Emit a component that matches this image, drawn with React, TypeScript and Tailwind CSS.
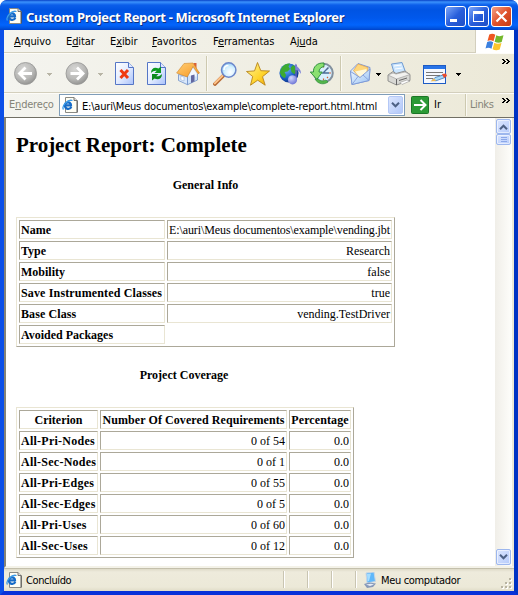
import React from "react";

const UI = "font-['DejaVu_Sans_Condensed','DejaVu_Sans',sans-serif] [font-stretch:condensed] text-[11px] leading-[14px] whitespace-nowrap";

function IePage({ className = "" }: { className?: string }) {
  return (
    <svg width="16" height="16" viewBox="0 0 16 16" className={"shrink-0 " + className}>
      <path d="M3.500.5h8.500l3 3v12H3.500z" fill="#fffef4" stroke="#8a8a84" />
      <path d="M15.300 3.500v12" stroke="#444" strokeWidth=".8" />
      <path d="M12 .5v3h3" fill="#ddd" stroke="#555" strokeWidth=".8" />
      <path d="M9.300 9.800C8 13 3 12.500 3 8.500S9 4.500 9 8.300H3.500" fill="none" stroke="#176bc7" strokeWidth="2.200" />
      <path d="M1.500 12.500C-.8 9.500 5.500 2 10.500 3.500" fill="none" stroke="#3c9be8" strokeWidth="1.300" />
    </svg>
  );
}

function Menu({ before = "", hot, after, w }: { before?: string; hot: string; after: string; w: string }) {
  return (
    <span className={w}>
      {before}
      <span className="underline underline-offset-1">{hot}</span>
      {after}
    </span>
  );
}

function Caret({ className, color }: { className: string; color: string }) {
  return (
    <svg width="5" height="3" viewBox="0 0 5 3" className={"shrink-0 " + className} shapeRendering="crispEdges">
      <path d="M0 0h5v1H4v1H3v1H2V2H1V1H0z" fill={color} />
    </svg>
  );
}

function More({ className }: { className: string }) {
  return (
    <svg width="8" height="5" viewBox="0 0 8 5" className={"shrink-0 " + className} shapeRendering="crispEdges">
      <path d="M0 0h2v1h1v1h1v1H3v1H2v1H0V4h1V3h1V2H1V1H0zM4 0h2v1h1v1h1v1H7v1H6v1H4V4h1V3h1V2H5V1H4z" fill="#000" />
    </svg>
  );
}

function Icon({ className, children }: { className: string; children: React.ReactNode }) {
  return (
    <svg width="24" height="24" viewBox="0 0 24 24" className={"shrink-0 " + className}>
      {children}
    </svg>
  );
}

function Separator({ className }: { className: string }) {
  return <div className={"h-[35px] w-[2px] shrink-0 border-l border-[#cdc9b0] bg-[#faf9f3] " + className} />;
}

function Defs() {
  return (
    <svg width="0" height="0" className="absolute">
      <defs>
        <radialGradient id="grey" cx=".4" cy=".3" r=".75">
          <stop stopColor="#d6d6d4" />
          <stop offset=".6" stopColor="#b9b9b7" />
          <stop offset="1" stopColor="#8f8f8d" />
        </radialGradient>
        <linearGradient id="page" x2="1" y2="1">
          <stop stopColor="#ffffff" />
          <stop offset=".5" stopColor="#e3ecff" />
          <stop offset="1" stopColor="#a9c1fa" />
        </linearGradient>
        <linearGradient id="gold" x2="1" y2="1">
          <stop stopColor="#fff59a" />
          <stop offset=".6" stopColor="#ffd42b" />
          <stop offset="1" stopColor="#eda10c" />
        </linearGradient>
        <linearGradient id="roof" x2="1" y2="1">
          <stop stopColor="#ffcf75" />
          <stop offset="1" stopColor="#f7951f" />
        </linearGradient>
        <radialGradient id="lens" cx=".6" cy=".65" r=".65">
          <stop stopColor="#ffffff" />
          <stop offset=".6" stopColor="#d1efff" />
          <stop offset="1" stopColor="#8ec9f4" />
        </radialGradient>
        <radialGradient id="globe" cx=".35" cy=".3" r=".75">
          <stop stopColor="#6fb5f7" />
          <stop offset=".6" stopColor="#1c63c8" />
          <stop offset="1" stopColor="#0c2c83" />
        </radialGradient>
        <radialGradient id="note" cx=".35" cy=".3" r=".75">
          <stop stopColor="#d4d8ff" />
          <stop offset="1" stopColor="#6a72d4" />
        </radialGradient>
        <linearGradient id="mail" x2="1" y2="1">
          <stop stopColor="#f0f8ff" />
          <stop offset="1" stopColor="#9cc4f4" />
        </linearGradient>
      </defs>
    </svg>
  );
}

function Toolbar() {
  return (
    <div className="flex h-[40px] shrink-0 items-start border-t border-[#fdfcf8] border-b border-b-[#d3cfbd] bg-linear-to-r from-[#f4f4ef] to-[#ece9d8]">
      <Icon className="ml-[10px] mt-[8px]">
        <circle cx="11.500" cy="11.500" r="11" fill="url(#grey)" stroke="#969694" strokeWidth=".8" />
        <path d="M18 11.500H6M11.500 5.500l-6 6 6 6" fill="none" stroke="#fff" strokeWidth="2.800" />
      </Icon>
      <Caret className="ml-[9px] mt-[19px]" color="#b8b5a6" />
      <Icon className="ml-[13px] mt-[8px]">
        <circle cx="12" cy="11.500" r="11" fill="url(#grey)" stroke="#969694" strokeWidth=".8" />
        <path d="M5.500 11.500h12M12 5.500l6 6-6 6" fill="none" stroke="#fff" strokeWidth="2.800" />
      </Icon>
      <Caret className="ml-[9px] mt-[19px]" color="#b8b5a6" />
      <Icon className="ml-[10px] mt-[8px]">
        <path d="M2.500.5h13l5 5v17h-18z" fill="url(#page)" stroke="#5576c6" />
        <path d="M15.500.5v5h5" fill="#dfe9ff" stroke="#5576c6" />
        <path d="M7.500 8l7.500 8M15 8l-7.500 8" stroke="#f03a12" strokeWidth="3" />
      </Icon>
      <Icon className="ml-[8px] mt-[8px]">
        <path d="M2.500.5h13l5 5v17h-18z" fill="url(#page)" stroke="#5576c6" />
        <path d="M15.500.5v5h5" fill="#dfe9ff" stroke="#5576c6" />
        <path d="M6 11C6 6.500 9.500 4.500 13.500 6.500L16 4.500V11H9.500L11.800 8.800C9.800 8.300 8 9 6 11z" fill="#0c9a20" />
        <path d="M17 12c0 4.500-3.500 6.500-7.500 4.500L7 18.500V12h6.500l-2.300 2.200c2 .5 3.800-.2 5.800-2.200z" fill="#0b8a1c" />
      </Icon>
      <Icon className="ml-[7px] mt-[8px]">
        <path d="M17.500 1h3v6h-3z" fill="#d86036" />
        <path d="M2.500 12.500l9 2v8.200l-9-4.200z" fill="#d9e8fb" stroke="#6f8fc6" strokeWidth=".8" />
        <path d="M11.500 13.500L17 4l6 7-1.500 1v6l-10 4.700z" fill="#cfe2fa" stroke="#6f8fc6" strokeWidth=".8" />
        <path d="M12.800 13.500L17 6l3.500 5.500v3z" fill="#f4f9ff" />
        <path d="M8 1.500L17 1l6.500 10-1.500.8-5-7.200L11.300 15 .6 11z" fill="url(#roof)" stroke="#d08a30" strokeWidth=".6" />
        <path d="M15 13.500l3.500-1v6.700L15 21z" fill="#63689f" />
        <path d="M4.800 14.200l3.200.8v4l-3.200-1.300z" fill="#fff" stroke="#8aa4cf" strokeWidth=".5" />
      </Icon>
      <Separator className="ml-[6px] mt-[2px]" />
      <Icon className="ml-[5px] mt-[8px]">
        <path d="M2 22l8-8" stroke="#b66a35" strokeWidth="3.800" strokeLinecap="round" />
        <path d="M1.800 21.400l7.700-7.700" stroke="#ffc58a" strokeWidth="2" strokeLinecap="round" />
        <circle cx="15.700" cy="8" r="7.200" fill="url(#lens)" stroke="#6c87cb" strokeWidth="1.500" />
        <path d="M11 8c0-3 2-4.500 4.500-4.500" fill="none" stroke="#fff" strokeWidth="1.500" />
      </Icon>
      <Icon className="ml-[9px] mt-[8px]">
        <path d="M11.500.5l3.300 8.200 8.700.3-7 5.700 2.700 8.500-7.500-5-7.200 5 2.200-8.700L.5 9.500l8-.6z" fill="url(#gold)" stroke="#b88418" strokeWidth=".9" />
      </Icon>
      <Icon className="ml-[9px] mt-[8px]">
        <circle cx="10" cy="11" r="9.600" fill="url(#globe)" />
        <path d="M2.500 6C4.500 2.500 8 1.300 11 1.500L9.500 4.500 11 7 8.500 9.500l-3 .5 1.500 3-1 3C3.500 15.500.8 12.500 1 9.500zM14 3l3.500 2.500.5 5-3 1.500-2.500-2-1-4z" fill="#3daa31" />
        <path d="M17 2.500v15" stroke="#5a60b8" strokeWidth="1.600" />
        <path d="M16.300 1c.5 4 6.200 5 5.700 11-1.500-3-3.200-4-5.700-4.300z" fill="#7e84d8" />
        <circle cx="13.500" cy="17.800" r="4.600" fill="url(#note)" />
      </Icon>
      <Icon className="ml-[7px] mt-[8px]">
        <circle cx="13.500" cy="11" r="9.300" fill="#d8efff" stroke="#83909e" strokeWidth="2" />
        <path d="M13.500 3.500v2M13.500 16.500v2M19 11h2M18 6l-1 1M18 16l-1-1" stroke="#d45f35" strokeWidth="1.200" />
        <path d="M18.500 5.500L13 11h6" fill="none" stroke="#4b6d98" strokeWidth="1.400" />
        <path d="M14 1C7 .5 3 5 3.500 10H.3l6.500 7.500L12.300 10H9c0-3 2-5 5-5.500z" fill="#8be070" stroke="#27893a" strokeWidth=".9" />
        <path d="M5 17c3 5.500 9 6 13 3l-2-2c-3 1.500-6 1-7.500-1z" fill="#54b54b" stroke="#27893a" strokeWidth=".6" />
      </Icon>
      <Separator className="ml-[6px] mt-[2px]" />
      <Icon className="ml-[7px] mt-[8px]">
        <path d="M1.500 9L9 1.500 21 5.500 20 18.500 3 22.500z" fill="url(#mail)" stroke="#7c98d6" />
        <path d="M4.500 8.500L9 2l10 3.500-.5 5-7.500 5.500z" fill="#ffd77b" stroke="#e2a24b" strokeWidth=".7" />
        <path d="M6 9.500L17.500 7v4L11 15.500z" fill="#fff7d8" />
        <path d="M1.500 9.500L11 15.500l10-8.500-1 11.500L3 22.500z" fill="url(#mail)" stroke="#7c98d6" strokeWidth=".9" />
        <path d="M3 22.500L9 14.500M20 18.500L14 13" stroke="#7c98d6" strokeWidth=".8" />
      </Icon>
      <Caret className="ml-[3px] mt-[19px]" color="#000" />
      <Icon className="ml-[6px] mt-[8px]">
        <path d="M4.500 2L15 .5 18.500 10l-11 2z" fill="#cbe6ff" stroke="#709bd2" />
        <path d="M7 4l7.500-1M8 7l7.500-1" stroke="#fff" />
        <path d="M1 13l5-3.500 3 2 9-2.500 5 3.500v6L9.500 23 1 19z" fill="#d8d8d4" stroke="#8a8a88" strokeWidth=".9" />
        <path d="M1 13l5-2 3 1 9-2 5 2.500L9.500 17z" fill="#f2f2ef" stroke="#969696" strokeWidth=".6" />
        <path d="M9.500 17v6M12 18.500l8-2.500" stroke="#666" />
        <path d="M13 20.500l7-2.500 3 1-8 3.500z" fill="#fff" stroke="#888" strokeWidth=".5" />
      </Icon>
      <Icon className="ml-[12px] mt-[8px]">
        <rect x=".5" y="3.500" width="22" height="18" fill="#f4f8ff" stroke="#1d5bc4" />
        <path d="M1 4h21v3H1z" fill="#2874e8" />
        <path d="M3 10.500h17M3 13.500h14M3 16.500h7" stroke="#777" />
        <path d="M9 18.500l3-3 8-2.500 2 2.500-9 3.300z" fill="#a6dafa" stroke="#3266a8" strokeWidth=".7" />
        <path d="M19 12l4-.5 1 2.500-3 2z" fill="#e94b2d" />
        <path d="M7.500 19.500l3.500-3 2 2.300z" fill="#f6ba49" />
      </Icon>
      <Caret className="ml-[9px] mt-[19px]" color="#000" />
      <More className="ml-auto mr-[4px] mt-[5px]" />
    </div>
  );
}

const caption = "flex h-[21px] w-[21px] shrink-0 rounded-[3px] border border-white";

function TitleBar() {
  return (
    <div className="flex h-[30px] shrink-0 items-start rounded-t-[7px] bg-[linear-gradient(#0842c7_0,#3b92fc_2px,#0b5eea_5px,#0054e3_10px,#0058ec_18px,#0264fc_25px,#0054e0_28px,#0043c9_30px)] pl-[6px] pt-[6px]">
      <IePage className="mt-[2px]" />
      <div className="ml-[4px] mt-[3px] w-[318px] whitespace-nowrap font-['Noto_Sans',sans-serif] text-[13px] font-bold leading-[16px] tracking-[-0.32px] text-white [text-shadow:1px_1px_#10327f]">
        Custom Project Report - Microsoft Internet Explorer
      </div>
      <div className="ml-auto mr-[6px] flex gap-[2px]">
        <div className={caption + " bg-linear-to-br from-[#7ea6f8] via-[#285edb] to-[#1e4fc6]"}>
          <div className="ml-[4px] mt-[12px] h-[3px] w-[7px] bg-white" />
        </div>
        <div className={caption + " bg-linear-to-br from-[#7ea6f8] via-[#285edb] to-[#1e4fc6]"}>
          <div className="ml-[4px] mt-[4px] h-[11px] w-[11px] border border-t-[3px] border-white" />
        </div>
        <div className={caption + " bg-linear-to-br from-[#f3a084] via-[#e0512a] to-[#c43c14]"}>
          <svg width="19" height="19" viewBox="0 0 19 19">
            <path d="M4.500 4.500l10 10M14.500 4.500l-10 10" stroke="#fff" strokeWidth="2.200" />
          </svg>
        </div>
      </div>
    </div>
  );
}

function MenuBar() {
  return (
    <div className="flex h-[23px] shrink-0 bg-linear-to-r from-[#f4f4ef] to-[#ece9d8]">
      <div className={"flex flex-1 border-b border-r border-[#d3cfbd] pl-[10px] pt-[5px] " + UI}>
        <Menu hot="A" after="rquivo" w="w-[52px] tracking-[-0.15px]" />
        <Menu before="E" hot="d" after="itar" w="w-[44px] tracking-[-0.1px]" />
        <Menu before="E" hot="x" after="ibir" w="w-[42px] tracking-[-0.1px]" />
        <Menu hot="F" after="avoritos" w="w-[61px]" />
        <Menu before="F" hot="e" after="rramentas" w="w-[77px] tracking-[-0.1px]" />
        <Menu before="Aj" hot="u" after="da" w="w-[30px] tracking-[-0.1px]" />
      </div>
      <div className="flex w-[38px] items-start justify-center bg-white pt-[2px]">
        <svg width="20" height="19" viewBox="0 0 20 19">
          <path d="M4.300 2.500Q7.500.8 10.300 2.700L8.500 9.200Q5.500 7.500 2.500 9z" fill="#ee5722" />
          <path d="M11.300 3.200Q14.500 5 18.500 3.300L16.700 10Q13.500 11.500 9.600 9.800z" fill="#74b82c" />
          <path d="M2.200 10Q5.500 8.500 8.200 10.200L6.500 16.700Q3.500 15 .5 16.500z" fill="#3b80df" />
          <path d="M9.300 10.800Q12.500 12.500 16.500 11L14.700 17.500Q11 19 7.600 17.300z" fill="#fbc52b" />
        </svg>
      </div>
    </div>
  );
}

function AddressBar() {
  return (
    <div className={"flex h-[24px] shrink-0 items-start border-t border-[#fdfcf8] bg-linear-to-r from-[#f4f4ef] to-[#ece9d8] " + UI}>
      <div className="ml-[5px] mt-[4px] w-[50px] tracking-[-0.2px] text-[#858478]">
        E<span className="underline underline-offset-1">n</span>dereço
      </div>
      <div className="flex h-[22px] w-[346px] border border-[#7f9db9] bg-white p-px">
        <IePage className="ml-[1px] mt-[1px]" />
        <div className="ml-[4px] mt-[4px] w-[305px] tracking-[-0.2px]">E:\auri\Meus documentos\example\complete-report.html.html</div>
        <div className="ml-auto mt-0 flex h-[18px] w-[15px] items-center justify-center rounded-[2px] border border-[#b4c8f6] bg-linear-to-br from-[#dce6fe] to-[#b2c8f9]">
          <Chevron />
        </div>
      </div>
      <svg width="18" height="18" viewBox="0 0 18 18" className="ml-[6px] mt-[2px]">
        <rect x=".5" y=".5" width="17" height="17" rx="1" fill="#2b9a35" stroke="#1b7627" />
        <path d="M3 9h11M9.500 4l5 5-5 5" fill="none" stroke="#fff" strokeWidth="2" />
      </svg>
      <div className="ml-[5px] mt-[4px] w-[31px]">Ir</div>
      <div className="mt-0 h-[22px] w-[2px] border-l border-[#cdc9b0] bg-[#faf9f3]" />
      <div className="ml-[3px] mt-[4px] w-[28px] tracking-[-0.4px] text-[#858478]">Links</div>
      <More className="ml-auto mr-[4px] mt-[4px]" />
    </div>
  );
}

function Chevron({ up = false }: { up?: boolean }) {
  return (
    <svg width="9" height="6" viewBox="0 0 9 6" className={up ? "rotate-180" : ""}>
      <path d="M1 .8l3.500 3.500L8 .8" fill="none" stroke="#4d6185" strokeWidth="2" />
    </svg>
  );
}

const cell = "h-[19px] border border-[#e9e5d3] border-l-[#aca899] border-t-[#aca899] px-px pt-[2px]";
const table = "border border-[#aca899] border-l-[#e9e5d3] border-t-[#e9e5d3] p-[2px] grid gap-[2px]";

const info: [string, string, string, string][] = [
  ["Name", "E:\\auri\\Meus documentos\\example\\vending.jbt", "", "tracking-[-0.1px]"],
  ["Type", "Research", "", ""],
  ["Mobility", "false", "", ""],
  ["Save Instrumented Classes", "true", "tracking-[0.15px]", ""],
  ["Base Class", "vending.TestDriver", "tracking-[0.1px]", ""],
  ["Avoided Packages", "", "", ""],
];

const coverage: [string, string][] = [
  ["All-Pri-Nodes", "0 of 54"],
  ["All-Sec-Nodes", "0 of 1"],
  ["All-Pri-Edges", "0 of 55"],
  ["All-Sec-Edges", "0 of 5"],
  ["All-Pri-Uses", "0 of 60"],
  ["All-Sec-Uses", "0 of 12"],
];

function Report() {
  return (
    <div className="flex-1 whitespace-nowrap bg-white pl-[10px] font-['Liberation_Serif',serif] text-[12px] leading-[15px] text-black">
      <h1 className="mt-[15px] h-[24px] text-[21px] font-bold leading-[24px] tracking-[-0.04px]">Project Report: Complete</h1>
      <h2 className="mt-[21px] w-[379px] text-center font-bold">General Info</h2>
      <div className={table + " mt-[24px] w-[379px] grid-cols-[146px_225px]"}>
        {info.map(([name, value, nameTracking, valueTracking]) => (
          <React.Fragment key={name}>
            <div className={cell + " font-bold " + nameTracking}>{name}</div>
            {value ? <div className={cell + " text-right " + valueTracking}>{value}</div> : <div />}
          </React.Fragment>
        ))}
      </div>
      <h2 className="mt-[21px] w-[336px] text-center font-bold">Project Coverage</h2>
      <div className={table + " mt-[24px] w-[338px] grid-cols-[79px_187px_62px]"}>
        <div className={cell + " text-center font-bold"}>Criterion</div>
        <div className={cell + " text-center font-bold tracking-[0.08px]"}>Number Of Covered Requirements</div>
        <div className={cell + " text-center font-bold tracking-[0.1px]"}>Percentage</div>
        {coverage.map(([name, count]) => (
          <React.Fragment key={name}>
            <div className={cell + " font-bold tracking-[0.25px]"}>{name}</div>
            <div className={cell + " text-right"}>{count}</div>
            <div className={cell + " text-right"}>0.0</div>
          </React.Fragment>
        ))}
      </div>
    </div>
  );
}

const scrollButton = "flex w-[15px] items-center justify-center rounded-[2px] border border-[#9db7ee] bg-linear-to-br from-[#dce6fe] to-[#b6cbfb] shadow-[inset_0_0_0_1px_#ffffff90]";

function ScrollBar() {
  return (
    <div className="flex w-[17px] flex-col items-center bg-linear-to-r from-[#f0eee8] to-[#fefefb] pb-px pt-px">
      <div className={scrollButton + " h-[15px]"}>
        <Chevron up />
      </div>
      <div className={scrollButton + " h-[11px] flex-col gap-px"}>
        {[0, 1, 2].map((i) => (
          <div key={i} className="h-px w-[6px] bg-[#8ca8e8]" />
        ))}
      </div>
      <div className={scrollButton + " mt-auto h-[16px]"}>
        <Chevron />
      </div>
    </div>
  );
}

function StatusDivider() {
  return <div className="mt-[3px] h-[17px] w-[2px] border-r border-white bg-[#c9c5b2]" />;
}

function StatusBar() {
  return (
    <div className={"flex h-[23px] shrink-0 bg-[linear-gradient(#a9a590_0,#dedac8_1px,#eeebdc_4px,#ece9d8_19px,#e0dcc8_23px)] " + UI}>
      <IePage className="ml-[2px] mt-[4px]" />
      <div className="ml-[4px] mt-[6px] w-[257px] tracking-[-0.4px]">Concluído</div>
      <div className="flex gap-[22px]">
        <StatusDivider />
        <StatusDivider />
        <StatusDivider />
        <StatusDivider />
      </div>
      <svg width="14" height="16" viewBox="0 0 14 16" className="ml-[6px] mt-[4px]">
        <path d="M3 1l8-1 1.500 9.500L4 11z" fill="#60b8fa" stroke="#c9d6e4" />
        <path d="M4 2l4-.5L6 9l-1.500.3z" fill="#a5ddff" />
        <path d="M1 12l5-1.500 7 1-3 3.500-6 1z" fill="#8799b8" />
        <path d="M3 12.500l5-.8 3 .8-4 1.500z" fill="#e7edf6" />
      </svg>
      <div className="ml-[4px] mt-[6px] tracking-[-0.35px]">Meu computador</div>
      <svg width="12" height="12" viewBox="0 0 12 12" className="ml-auto mr-[1px] mt-[10px]" shapeRendering="crispEdges">
        {[[8, 0], [4, 4], [8, 4], [0, 8], [4, 8], [8, 8]].map(([x, y]) => (
          <g key={`${x}-${y}`}>
            <rect x={x + 1} y={y + 1} width="2" height="2" fill="#fff" />
            <rect x={x} y={y} width="2" height="2" fill="#b8b4a2" />
          </g>
        ))}
      </svg>
    </div>
  );
}

export default function App() {
  return (
    <div className="flex h-[595px] w-[518px] flex-col overflow-hidden rounded-t-[7px] bg-[#0045d8] text-black">
      <Defs />
      <TitleBar />
      <div className="flex min-h-0 flex-1 flex-col border-x-[4px] border-b-[4px] border-b-[#0831d9] border-l-[#0b4fe8] border-r-[#0033c4]">
        <MenuBar />
        <Toolbar />
        <AddressBar />
        <div className="flex min-h-0 flex-1 border-b-2 border-l-2 border-t border-b-[#f4f2e8] border-l-[#858377] border-t-[#716f64]">
          <Report />
          <ScrollBar />
          <div className="w-[2px] bg-[#ece9d8]" />
        </div>
        <StatusBar />
      </div>
    </div>
  );
}
